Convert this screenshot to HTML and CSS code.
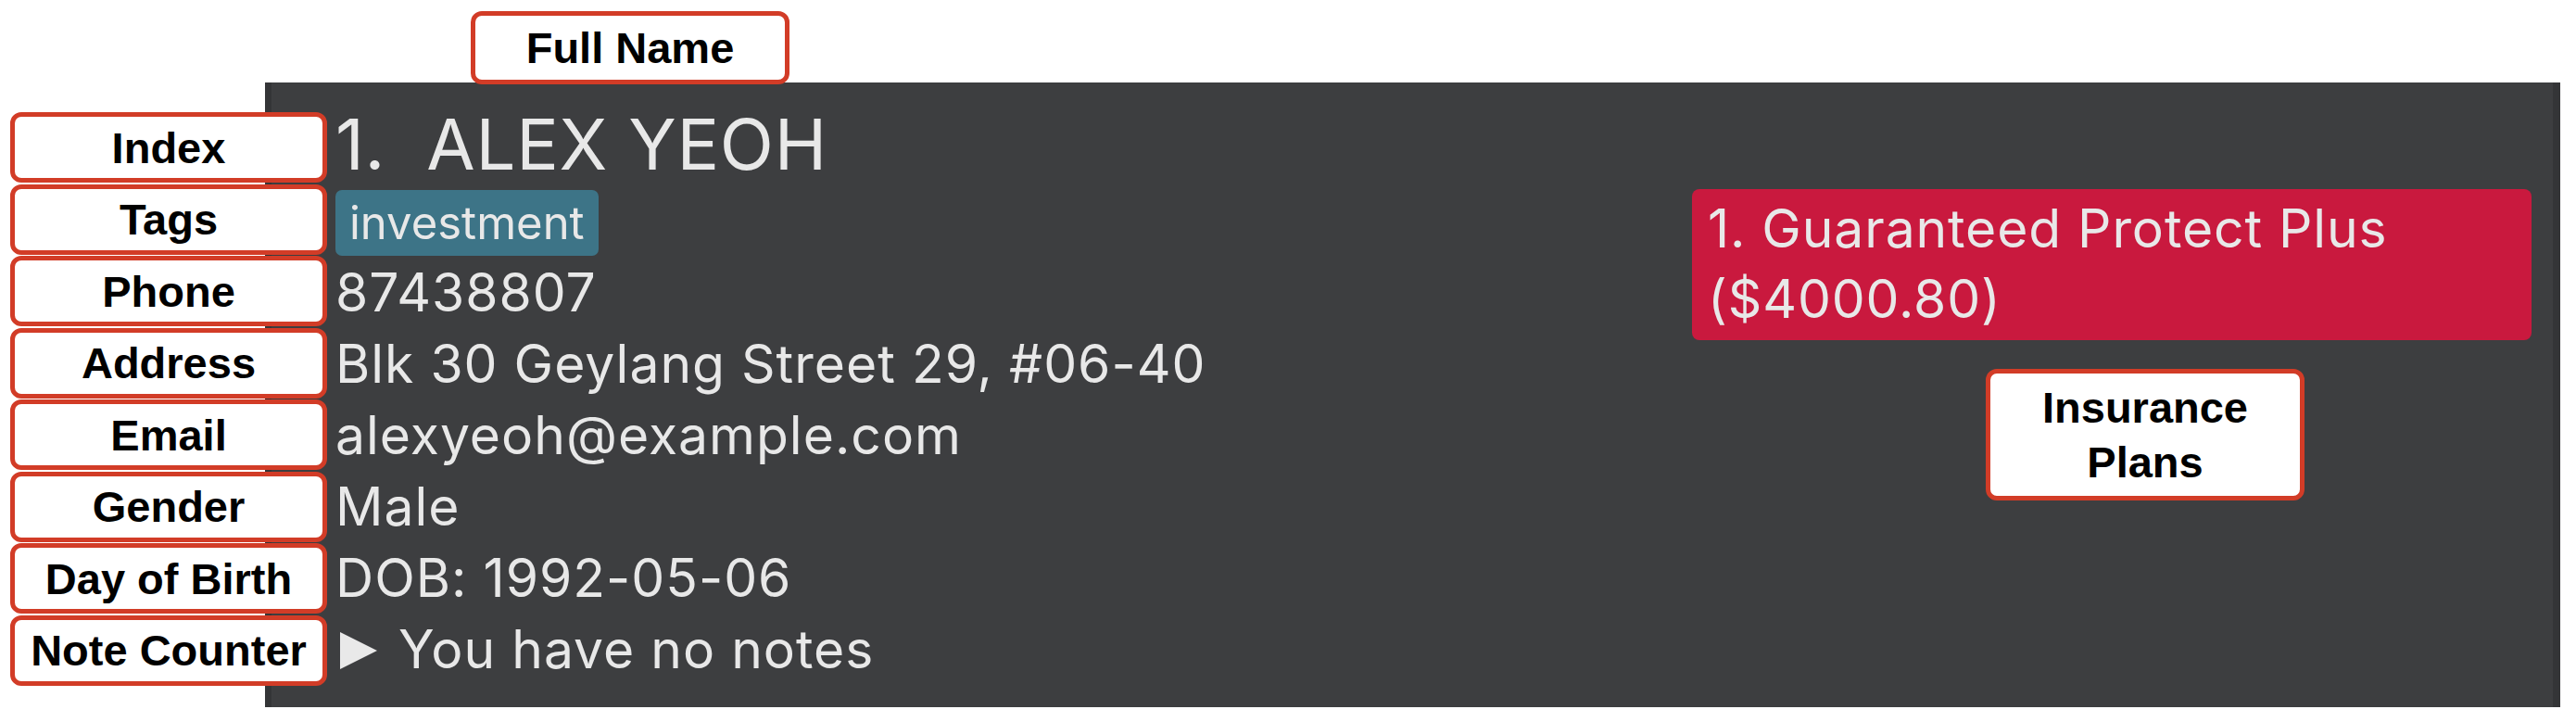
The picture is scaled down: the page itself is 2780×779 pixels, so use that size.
FILE: index.html
```html
<!DOCTYPE html>
<html lang="en">
<head>
<meta charset="utf-8">
<title>Person card</title>
<link rel="stylesheet" href="styles.css">
</head>
<body>
<div class="stage">
  <div class="card">
    <div class="details">
      <div class="name">1.&nbsp; ALEX YEOH</div>
      <div class="tags"><span class="tag">investment</span></div>
      <div class="line">87438807</div>
      <div class="line">Blk 30 Geylang Street 29, #06-40</div>
      <div class="line">alexyeoh@example.com</div>
      <div class="line">Male</div>
      <div class="line">DOB: 1992-05-06</div>
      <div class="line notes"><svg class="arrow" width="40" height="40" viewBox="0 0 40 40"><polygon points="0,0 40,20 0,40" fill="#e9e9e9"/></svg><span class="notes-text">You have no notes</span></div>
    </div>
    <div class="plans">
      <div class="plan">1. Guaranteed Protect Plus ($4000.80)</div>
    </div>
  </div>

  <div class="callout callout-name">Full Name</div>
  <div class="callout-column">
    <div class="callout">Index</div>
    <div class="callout">Tags</div>
    <div class="callout">Phone</div>
    <div class="callout">Address</div>
    <div class="callout">Email</div>
    <div class="callout">Gender</div>
    <div class="callout">Day of Birth</div>
    <div class="callout">Note Counter</div>
  </div>
  <div class="callout callout-plans">Insurance<br>Plans</div>
</div>
</body>
</html>
```

FILE: styles.css
```css
html, body {
  margin: 0;
  padding: 0;
  background: #ffffff;
}

.stage {
  position: relative;
  width: 2780px;
  height: 779px;
  padding-top: 89px;
  box-sizing: border-box;
}

.card {
  margin-left: 286px;
  width: 2477px;
  height: 674px;
  box-sizing: border-box;
  background: #3d3e40;
  border-left: 7px solid #343537;
  border-right: 8px solid #343537;
  padding: 23px 0 0 69px;
  display: grid;
  grid-template-columns: 1464px 906px;
  align-items: start;
  font-family: "Inter", "Noto Sans", sans-serif;
  color: #e8e8e8;
}

.details {
  display: flex;
  flex-direction: column;
}

.name {
  font-size: 76px;
  letter-spacing: 0.7px;
  line-height: 87.5px;
  height: 87.5px;
  white-space: pre;
}

.tags {
  height: 77px;
  box-sizing: border-box;
  padding-top: 5.5px;
  display: flex;
  align-items: flex-start;
}

.tag {
  display: inline-flex;
  align-items: center;
  height: 71px;
  padding: 0 15px;
  background: #3d7487;
  border-radius: 7px;
  font-size: 49px;
  line-height: 71px;
}

.line {
  font-size: 57px;
  letter-spacing: 1px;
  line-height: 77px;
  height: 77px;
  white-space: nowrap;
}

.notes {
  display: flex;
  align-items: center;
}

.arrow {
  margin: 3px 23px 0 5px;
  flex: none;
}

.plans {
  padding-top: 92px;
}

.plan {
  background: #c9193e;
  border-radius: 8px;
  padding: 5px 17px 6px 17px;
  font-size: 57px;
  letter-spacing: 0.9px;
  line-height: 76px;
}

.callout {
  box-sizing: border-box;
  background: #ffffff;
  border: 5px solid #d23c27;
  border-radius: 12px;
  color: #000000;
  font-family: "Liberation Sans", Arial, sans-serif;
  font-weight: bold;
  font-size: 47px;
  line-height: 1;
  display: flex;
  align-items: center;
  justify-content: center;
  text-align: center;
}

.callout-name {
  position: absolute;
  left: 508px;
  top: 12px;
  width: 344px;
  height: 79px;
}

.callout-column {
  position: absolute;
  left: 11px;
  top: 121px;
  width: 342px;
  display: flex;
  flex-direction: column;
  gap: 1.5px;
}

.callout-column .callout {
  height: 76px;
}

.callout-plans {
  position: absolute;
  left: 2143px;
  top: 398px;
  width: 344px;
  height: 142px;
  line-height: 59px;
}
```
